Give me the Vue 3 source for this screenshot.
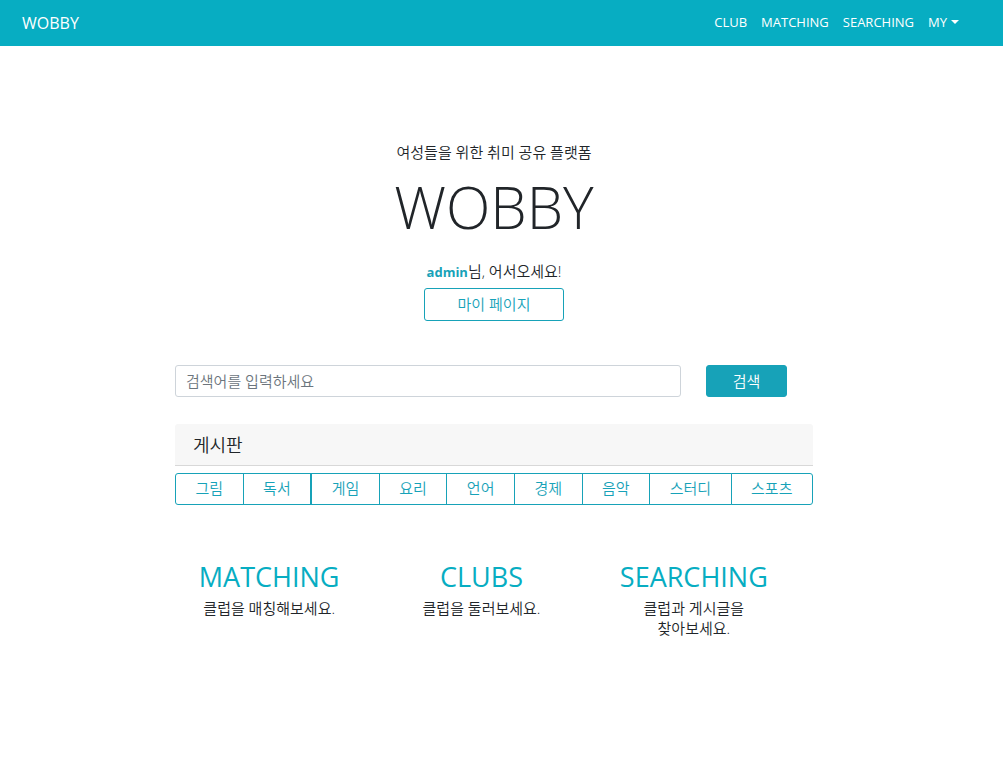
<script setup>
import { ref } from 'vue'

const keyword = ref('')
const navLinks = ['CLUB', 'MATCHING', 'SEARCHING']
const boards = ['그림', '독서', '게임', '요리', '언어', '경제', '음악', '스터디', '스포츠']
const features = [
  { title: 'MATCHING', lines: ['클럽을 매칭해보세요.'] },
  { title: 'CLUBS', lines: ['클럽을 둘러보세요.'] },
  { title: 'SEARCHING', lines: ['클럽과 게시글을', '찾아보세요.'] },
]
</script>

<template>
  <div class="page">
    <header class="navbar">
      <a class="brand" href="#">WOBBY</a>
      <nav class="links">
        <a v-for="link in navLinks" :key="link" href="#">{{ link }}</a>
        <button type="button" class="dropdown" aria-haspopup="true">
          MY<span class="caret"></span>
        </button>
      </nav>
    </header>

    <main class="container">
      <section class="hero">
        <p class="tagline">여성들을 위한 취미 공유 플랫폼</p>
        <h1>WOBBY</h1>
        <p class="welcome"><strong>admin</strong>님, 어서오세요!</p>
        <button type="button" class="mypage">마이 페이지</button>
      </section>

      <form class="search" @submit.prevent>
        <input v-model="keyword" type="text" aria-label="검색어" placeholder="검색어를 입력하세요" />
        <button type="submit">검색</button>
      </form>

      <section>
        <h2 class="board-title">게시판</h2>
        <div class="board-group">
          <button v-for="board in boards" :key="board" type="button">{{ board }}</button>
        </div>
      </section>

      <section class="features">
        <article v-for="item in features" :key="item.title">
          <h3><a href="#">{{ item.title }}</a></h3>
          <p v-for="line in item.lines" :key="line">{{ line }}</p>
        </article>
      </section>
    </main>
  </div>
</template>

<style>
body {
  background: #fff;
}
</style>

<style scoped>
.page {
  color: #212529;
  font-family: "Open Sans", "Noto Sans CJK KR", sans-serif;
  font-size: 15px;
  line-height: 20px;
}

.page *,
.page *::before {
  box-sizing: border-box;
}

h1,
h2,
h3,
p {
  margin: 0;
  font-weight: 400;
}

a {
  color: inherit;
  text-decoration: none;
}

button,
input {
  margin: 0;
  font: inherit;
}

button {
  cursor: pointer;
}

.container p,
.container h2,
.container button,
.container input {
  font-weight: 350;
}

.navbar {
  display: flex;
  align-items: center;
  justify-content: space-between;
  height: 46px;
  padding: 0 44px 0 22px;
  background: #07adc2;
  color: #fff;
}

.brand {
  font-size: 16px;
}

.links {
  display: flex;
  align-items: center;
  gap: 14px;
  padding-bottom: 2px;
  font-size: 13px;
}

.dropdown {
  display: flex;
  align-items: center;
  gap: 4px;
  padding: 0;
  border: 0;
  background: none;
  color: inherit;
}

.caret {
  border: 4px solid transparent;
  border-top-color: #fff;
  border-bottom: 0;
}

.container {
  max-width: 653px;
  margin: 0 auto;
  padding: 96px 15px 0 0;
}

.hero {
  display: flex;
  flex-direction: column;
  align-items: center;
}

h1 {
  margin: 9px 0 18px;
  font-size: 58px;
  font-weight: 300;
  line-height: 72px;
}

.welcome {
  margin: 0 0 7px;
}

.welcome strong {
  color: #17a2b8;
  font-size: 13px;
  font-weight: 700;
  line-height: 16px;
}

.mypage {
  width: 140px;
  height: 33px;
  padding: 0 0 2px;
  border: 1px solid #17a2b8;
  border-radius: 3px;
  background: #fff;
  color: #17a2b8;
}

.search {
  display: flex;
  gap: 25px;
  margin: 44px 0 27px;
  padding-right: 26px;
}

.search input {
  flex: 1;
  min-width: 0;
  height: 32px;
  padding: 0 10px;
  border: 1px solid #ced4da;
  border-radius: 3px;
  background: #fff;
  color: #495057;
}

.search input::placeholder {
  color: #6c757d;
  opacity: 1;
}

.search button {
  width: 81px;
  border: 1px solid #17a2b8;
  border-radius: 3px;
  background: #17a2b8;
  color: #fff;
}

.board-title {
  padding: 11px 18px 9px;
  border-bottom: 1px solid #d8d8d8;
  border-radius: 3px 3px 0 0;
  background: #f7f7f7;
  font-size: 18px;
  line-height: 21px;
}

.board-group {
  display: flex;
  margin-top: 7px;
}

.board-group button {
  flex: 1 1 auto;
  height: 32px;
  padding: 0 18px 2px;
  border: 1px solid #17a2b8;
  background: #fff;
  color: #17a2b8;
}

.board-group button + button {
  margin-left: -1px;
}

.board-group button:nth-child(3) {
  margin-left: 0;
}

.board-group button:first-child {
  border-radius: 3px 0 0 3px;
}

.board-group button:last-child {
  border-radius: 0 3px 3px 0;
}

.features {
  display: grid;
  grid-template-columns: repeat(3, 1fr);
  margin: 55px 13px 0 -12px;
  text-align: center;
}

h3 {
  margin-bottom: 5px;
  color: #07adc2;
  font-size: 27px;
  line-height: 33px;
}
</style>
